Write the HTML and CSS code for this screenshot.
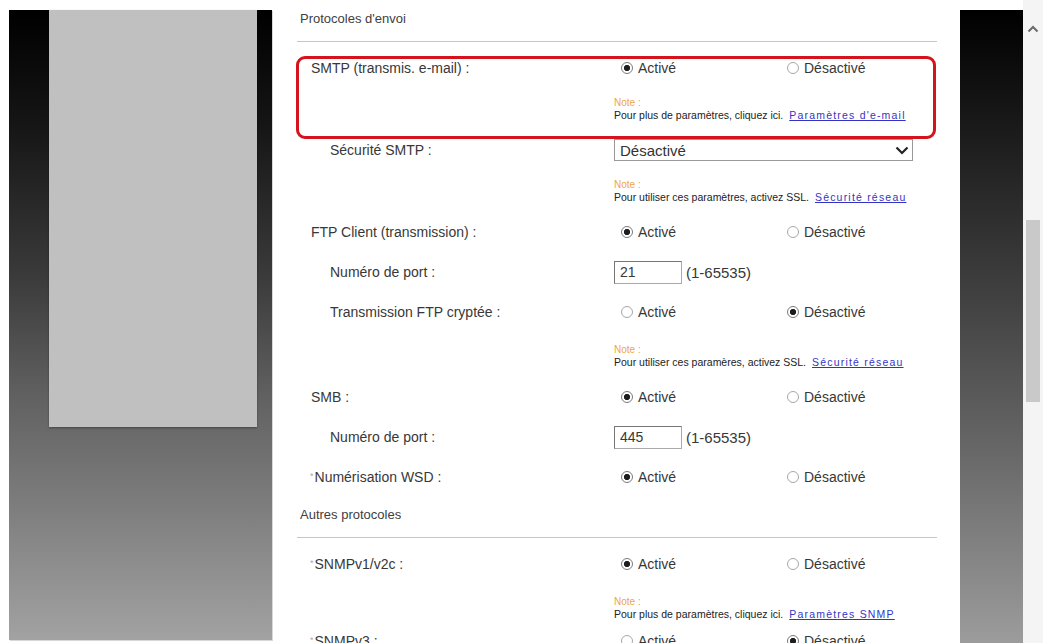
FILE: index.html
```html
<!DOCTYPE html>
<html lang="fr">
<head>
    <meta charset="UTF-8">
    <meta name="viewport" content="width=device-width, initial-scale=1.0">
    <title>Protocoles</title>
    <link rel="stylesheet" href="styles.css">
</head>
<body>
    <div class="page">
        <!-- Menu de gauche -->
        <aside class="sidebar">
            <div class="sidebar-panel"></div>
        </aside>

        <main class="content">
            <h2 class="section-title">Protocoles d'envoi</h2>

            <div class="highlight">
                <div class="row">
                    <span class="label">SMTP (transmis. e-mail) :</span>
                    <div class="options">
                        <span class="option"><span class="radio checked"></span>Activé</span>
                        <span class="option"><span class="radio"></span>Désactivé</span>
                    </div>
                </div>
                <div class="note">
                    <span class="note-title">Note :</span>
                    Pour plus de paramètres, cliquez ici.<a href="#">Paramètres d'e-mail</a>
                </div>
            </div>

            <div class="row sub">
                <span class="label">Sécurité SMTP :</span>
                <div class="select">Désactivé
                    <svg width="14" height="9" viewBox="0 0 14 9"><path d="M1.5 1.5 L7 7 L12.5 1.5" fill="none" stroke="#222" stroke-width="2.2"/></svg>
                </div>
            </div>
            <div class="note">
                <span class="note-title">Note :</span>
                Pour utiliser ces paramètres, activez SSL.<a href="#">Sécurité réseau</a>
            </div>

            <div class="row">
                <span class="label">FTP Client (transmission) :</span>
                <div class="options">
                    <span class="option"><span class="radio checked"></span>Activé</span>
                    <span class="option"><span class="radio"></span>Désactivé</span>
                </div>
            </div>
            <div class="row sub">
                <span class="label">Numéro de port :</span>
                <div class="field"><span class="input">21</span><span class="range">(1-65535)</span></div>
            </div>
            <div class="row sub">
                <span class="label">Transmission FTP cryptée :</span>
                <div class="options">
                    <span class="option"><span class="radio"></span>Activé</span>
                    <span class="option"><span class="radio checked"></span>Désactivé</span>
                </div>
            </div>
            <div class="note spaced">
                <span class="note-title">Note :</span>
                Pour utiliser ces paramères, activez SSL.<a href="#">Sécurité réseau</a>
            </div>

            <div class="row">
                <span class="label">SMB :</span>
                <div class="options">
                    <span class="option"><span class="radio checked"></span>Activé</span>
                    <span class="option"><span class="radio"></span>Désactivé</span>
                </div>
            </div>
            <div class="row sub">
                <span class="label">Numéro de port :</span>
                <div class="field"><span class="input">445</span><span class="range">(1-65535)</span></div>
            </div>
            <div class="row">
                <span class="label star"><span class="req">*</span>Numérisation WSD :</span>
                <div class="options">
                    <span class="option"><span class="radio checked"></span>Activé</span>
                    <span class="option"><span class="radio"></span>Désactivé</span>
                </div>
            </div>

            <h2 class="section-title second">Autres protocoles</h2>

            <div class="row">
                <span class="label star"><span class="req">*</span>SNMPv1/v2c :</span>
                <div class="options">
                    <span class="option"><span class="radio checked"></span>Activé</span>
                    <span class="option"><span class="radio"></span>Désactivé</span>
                </div>
            </div>
            <div class="note spaced tight">
                <span class="note-title">Note :</span>
                Pour plus de paramètres, cliquez ici.<a href="#">Paramètres SNMP</a>
            </div>

            <div class="row">
                <span class="label star"><span class="req">*</span>SNMPv3 :</span>
                <div class="options">
                    <span class="option"><span class="radio"></span>Activé</span>
                    <span class="option"><span class="radio checked"></span>Désactivé</span>
                </div>
            </div>
        </main>

        <div class="band"></div>

        <!-- Barre de défilement -->
        <div class="scrollbar">
            <svg class="scroll-up" width="12" height="8" viewBox="0 0 12 8"><path d="M1.5 6.5 L6 2 L10.5 6.5" fill="none" stroke="#6a6a6a" stroke-width="2"/></svg>
            <div class="thumb"></div>
        </div>
    </div>
</body>
</html>
```

FILE: styles.css
```css
* {
    box-sizing: border-box;
}

body {
    margin: 0;
    background-color: #fff;
    font-family: "Liberation Sans", Arial, sans-serif;
    color: #383838;
    overflow: hidden;
}

.page {
    display: flex;
    height: 643px;
}

/* Menu de gauche */
.sidebar {
    width: 263px;
    height: 630px;
    margin: 10px 0 0 9px;
    padding-left: 40px;
    background: linear-gradient(#000 0%, #151515 18%, #3a3a3a 42%, #626262 62%, #7c7c7c 78%, #a2a2a2 100%);
    box-shadow: 1px 1px 0 #d8d8d8;
}

.sidebar-panel {
    width: 208px;
    height: 417px;
    background-color: #c0c0c0;
    box-shadow: 0 1px 2px rgba(0, 0, 0, 0.35);
}

/* Contenu */
.content {
    width: 688px;
    padding: 9px 23px 0 25px;
}

.section-title {
    margin: 0 0 6px;
    padding: 0 0 12px 3px;
    font-size: 13px;
    font-weight: normal;
    line-height: 20px;
    color: #404040;
    border-bottom: 1px solid #c6c6c6;
}

.section-title.second {
    margin-top: 8px;
}

.row {
    display: grid;
    grid-template-columns: 317px 1fr;
    align-items: center;
    height: 40px;
    font-size: 14px;
}

.label {
    padding-left: 14px;
}

.row.sub .label {
    padding-left: 33px;
}

.label.star {
    padding-left: 13px;
}

.req {
    color: #aaa;
    font-size: 9px;
    vertical-align: 3px;
    margin-right: 1px;
}

.options {
    display: flex;
}

.option {
    display: flex;
    align-items: center;
    width: 166px;
}

.radio {
    width: 12px;
    height: 12px;
    margin: 0 5px 0 7px;
    border-radius: 50%;
    border: 1px solid #a8a8a8;
    background-color: #fff;
}

.radio.checked {
    border-color: #7a7a7a;
    background: radial-gradient(circle, #1e1e1e 0 2.8px, #fff 3.4px);
}

.select {
    display: flex;
    align-items: center;
    justify-content: space-between;
    width: 299px;
    height: 22px;
    padding: 0 3px 0 5px;
    border: 1px solid #999;
    font-size: 15px;
    color: #333;
}

.field {
    display: flex;
    align-items: center;
}

.input {
    width: 68px;
    height: 23px;
    margin-right: 4px;
    padding-left: 5px;
    border: 1px solid #aaa;
    border-top-color: #767676;
    border-left-color: #767676;
    font-size: 14px;
    line-height: 21px;
}

.range {
    font-size: 15px;
}

/* Notes */
.note {
    margin: 8px 0 8px 317px;
    font-size: 10.5px;
    line-height: 13px;
    color: #222;
}

.note.spaced {
    margin-top: 11px;
}

.note.tight {
    margin-bottom: 0;
}

.note-title {
    display: block;
    font-size: 10px;
    color: #eea545;
}

.note a {
    margin-left: 6px;
    color: #3434c4;
    letter-spacing: 1.2px;
}

/* Cadre rouge */
.highlight {
    position: relative;
}

.highlight::after {
    content: "";
    position: absolute;
    top: 8px;
    bottom: -17px;
    left: -1px;
    right: 1px;
    border: 3px solid #d3141c;
    border-radius: 9px;
    pointer-events: none;
}

.band {
    width: 63px;
    height: 633px;
    margin-top: 10px;
    background: linear-gradient(#000 0%, #1c1c1c 20%, #404040 45%, #686868 70%, #9c9c9c 100%);
}

.scrollbar {
    display: flex;
    flex-direction: column;
    align-items: center;
    width: 20px;
    background-color: #f4f4f4;
}

.scroll-up {
    margin-top: 25px;
}

.thumb {
    width: 14px;
    height: 182px;
    margin-top: 187px;
    background-color: #c9c9c9;
}
```
